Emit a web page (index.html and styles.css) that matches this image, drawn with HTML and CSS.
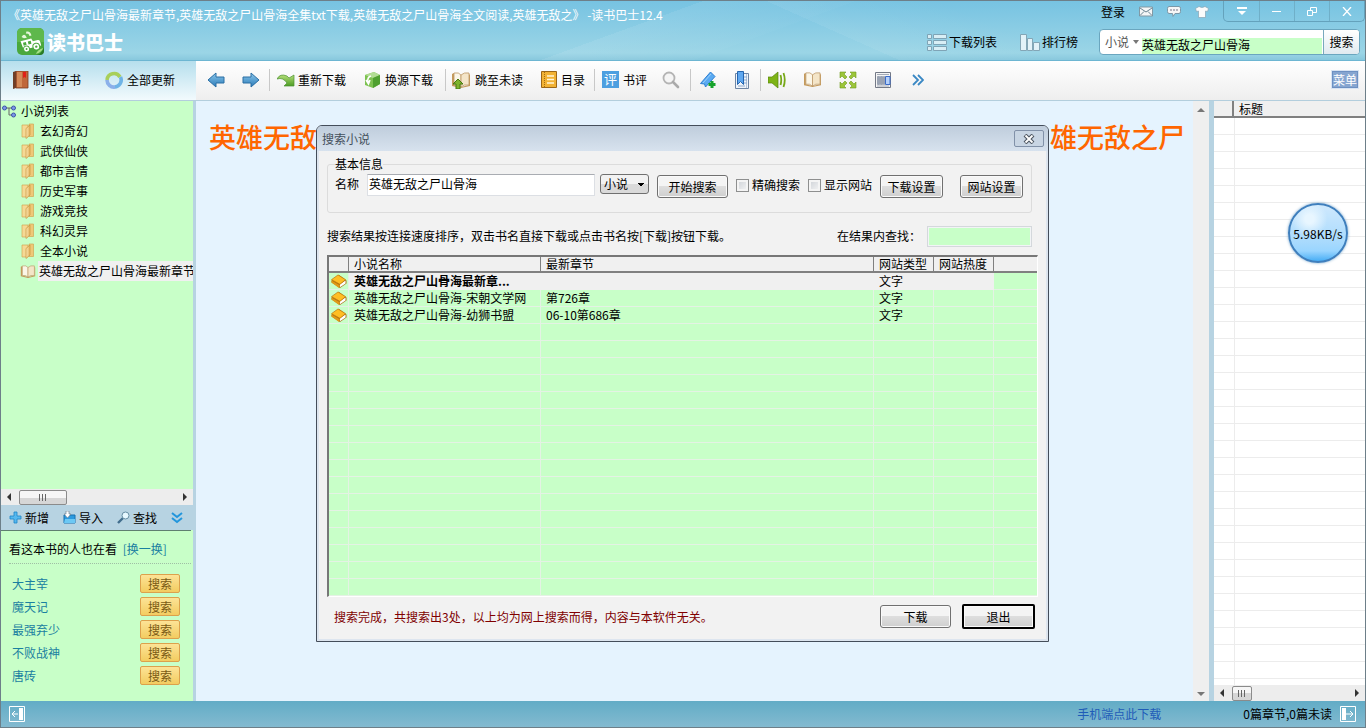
FILE: index.html
```html
<!DOCTYPE html>
<html lang="zh-CN">
<head>
<meta charset="utf-8">
<title>读书巴士12.4</title>
<link rel="stylesheet" href="styles.css">
</head>
<body>
<svg class="defs" aria-hidden="true">
  <defs>
    <linearGradient id="gFolder" x1="0" x2="1"><stop offset="0" stop-color="#fbe6b0"/><stop offset="1" stop-color="#e4b25e"/></linearGradient>
    <linearGradient id="gBlue" x1="0" y1="0" x2="0" y2="1"><stop offset="0" stop-color="#8cc8ec"/><stop offset="1" stop-color="#2a7ab8"/></linearGradient>
    <linearGradient id="gGreen" x1="0" y1="0" x2="0" y2="1"><stop offset="0" stop-color="#b4de78"/><stop offset="1" stop-color="#4c9c24"/></linearGradient>
    <symbol id="folder" viewBox="0 0 14 16"><path d="M1 2h6v12H1z" fill="#f5d995" stroke="#d3a654" stroke-width=".7"/><path d="M8 1h4.500v12.500H8z" fill="#efc878" stroke="#d3a654" stroke-width=".7"/><path d="M5 5.500L9 2v10l-4 3.500z" fill="url(#gFolder)" stroke="#c8963e" stroke-width=".7"/></symbol>
    <symbol id="book" viewBox="0 0 18 16"><path d="M1 7l8-6 8 6v3l-7 5-9-6z" fill="#a86a10"/><path d="M10 11l6-4v3l-6 4z" fill="#fff"/><path d="M1 6l7-5 8 5-6 5z" fill="#ffbe24" stroke="#c07c10" stroke-width=".8"/><path d="M1 7v2l8 6 1-3z" fill="#e09a18"/></symbol>
    <symbol id="openbook" viewBox="0 0 20 18"><path d="M1 3l2-1v12l7 2 8-2V3l1 1v11l-9 2-9-2z" fill="#c59a5b"/><path d="M3 2q5-1 7 2v12q-3-3-7-2z" fill="#fbf6e8" stroke="#bc9866" stroke-width=".8"/><path d="M10 4q3-3 8-2v12q-5-1-8 2z" fill="#f4e5c8" stroke="#bc9866" stroke-width=".8"/></symbol>
    <symbol id="arrow" viewBox="0 0 18 16"><path d="M1 8l8-7v4h8v6H9v4z" fill="url(#gBlue)" stroke="#2a6ea4"/></symbol>
  </defs>
</svg>

<header class="top">
  <div class="top-left">
    <h1 class="caption">《英雄无敌之尸山骨海最新章节,英雄无敌之尸山骨海全集txt下载,英雄无敌之尸山骨海全文阅读,英雄无敌之》 -读书巴士12.4</h1>
    <div class="brand">
      <svg width="27" height="27" viewBox="0 0 27 27"><rect width="27" height="27" rx="5" fill="#4aa83c"/><path d="M0 14h27V5a5 5 0 0 0-5-5H5a5 5 0 0 0-5 5z" fill="#5eb84c"/><g transform="rotate(-14 13 14)"><path d="M4 11h11l1 3h5q2 0 2 3v3H5z" fill="#fff"/><path d="M6 13h3v3H6zM11 13h3v3h-3z" fill="#4aa83c"/><path d="M12 3q4 0 4 5h-2q0-3-3-3zM6 7q4-4 5 2H8z" fill="#e6f7dc"/><circle cx="8" cy="20" r="3" fill="#fff" stroke="#4aa83c"/><circle cx="18" cy="20" r="3.4" fill="#fff" stroke="#4aa83c"/><circle cx="8" cy="20" r="1" fill="#4aa83c"/><circle cx="18" cy="20" r="1.2" fill="#4aa83c"/></g><path d="M19 27q6-1 8-8v4q0 4-4 4z" fill="#2a7a26"/><path d="M19 26q1-4 7-6-1 4-7 6z" fill="#a8e088"/></svg>
      <strong>读书巴士</strong>
    </div>
  </div>
  <div class="top-right">
    <div class="account">
      <a href="#">登录</a>
      <svg width="14" height="11" viewBox="0 0 14 11"><path d="M.5 1h13v9H.5z" fill="#f4f6f7" stroke="#8199a5"/><path d="M1 2l6 4 6-4M1 9.500l4-4M13 9.500l-4-4" fill="none" stroke="#6b8593"/></svg>
      <svg width="14" height="12" viewBox="0 0 14 12"><path d="M2 .5h10q1.500 0 1.500 2v3q0 2-1.500 2H8l-2 3-.5-3H2Q.5 7.500.5 5.500v-3Q.5.500 2 .5z" fill="#f6f6f6" stroke="#7b98a8"/><path d="M3 4h2M6 4h2M9 4h2" stroke="#778"/></svg>
      <svg width="14" height="12" viewBox="0 0 14 12"><path d="M4 .5q3 2 6 0l3.500 2-1 3-2-.5v6.500h-7V5l-2 .5-1-3z" fill="#fbfbfb" stroke="#88a5b4" stroke-width=".7"/></svg>
      <div class="wincontrols">
        <button aria-label="主菜单"><svg width="10" height="9" viewBox="0 0 10 9"><path d="M0 1h10" stroke="#fff" stroke-width="2"/><path d="M1 4h8L5 8z" fill="#fff"/></svg></button>
        <button aria-label="最小化"><svg width="10" height="9" viewBox="0 0 10 9"><path d="M0 4.500h9" stroke="#fff"/></svg></button>
        <button aria-label="还原"><svg width="10" height="9" viewBox="0 0 10 9"><path d="M3.500 3V.5h6v5H6M.5 3.500h5v5h-5z" fill="none" stroke="#fff"/></svg></button>
        <button aria-label="关闭"><svg width="10" height="9" viewBox="0 0 10 9"><path d="M1 0l8 9M9 0L1 9" stroke="#fff" stroke-width="1.300"/></svg></button>
      </div>
    </div>
    <div class="finder">
      <button class="plain"><svg width="20" height="17" viewBox="0 0 20 17"><g fill="#d8eef5" stroke="#7fa4b6"><path d="M.5.5h4v4h-4zM.5 6.500h4v4h-4zM.5 12.500h4v4h-4zM6.500.5h13v4h-13zM6.500 6.500h13v4h-13zM6.500 12.500h13v4h-13z"/></g></svg>下载列表</button>
      <button class="plain rank"><svg width="20" height="17" viewBox="0 0 20 17"><g fill="#e2f2f8" stroke="#83a6b6"><path d="M.5.5h6v16h-6zM7.500 4.500h5v12h-5zM13.500 8.500h6v8h-6z"/></g></svg>排行榜</button>
      <form class="search" onsubmit="return false">
        <button class="kind" type="button">小说<svg width="6" height="4" viewBox="0 0 6 4"><path d="M0 0h6L3 4z" fill="#777"/></svg></button>
        <input aria-label="搜索关键字" value="英雄无敌之尸山骨海">
        <button class="go">搜索</button>
      </form>
    </div>
  </div>
</header>

<div class="bars">
  <div class="bar-left">
    <button class="plain"><svg width="17" height="18" viewBox="0 0 17 18"><path d="M1 1l3-1v17l-3 1z" fill="#6f3f28"/><path d="M4 0h12v17H4z" fill="#c0673a" stroke="#7c3d22" stroke-width=".8"/><path d="M5 1h5v15H5z" fill="#d48a58"/><path d="M11 1h3v6l-1.500-1L11 7z" fill="#e02018"/></svg>制电子书</button>
    <button class="plain"><svg width="18" height="18" viewBox="0 0 18 18"><g fill="none" stroke-width="3.600"><path d="M2 9a7 7 0 0 1 13-3" stroke="#a8cf5a"/><path d="M15.500 6a7 7 0 0 1-6 10" stroke="#6fb4e6"/><path d="M10 16a7 7 0 0 1-8-7" stroke="#8bb0ea"/></g></svg>全部更新</button>
  </div>
  <nav class="bar-main">
    <button class="plain" aria-label="后退"><svg width="18" height="16"><use href="#arrow"/></svg></button>
    <button class="plain next" aria-label="前进"><svg width="18" height="16" class="flip"><use href="#arrow"/></svg></button>
    <i class="sep"></i>
    <button class="plain redo"><svg width="18" height="14" viewBox="0 0 18 14"><path d="M0 6q3-6 10-3l2 2 5-3v11H7l3-3q-4-6-10-4z" fill="url(#gGreen)" stroke="#4c9130" stroke-width=".7"/></svg>重新下载</button>
    <button class="plain swap"><svg width="17" height="18" viewBox="0 0 17 18"><path d="M1 4l9-3 6 3v9l-7 4-8-3z" fill="#7cc250"/><path d="M1 4l9-3 6 3-7 3z" fill="#b2dd94"/><path d="M9 7l7-3v9l-7 4z" fill="#4fa030"/><path d="M7 5q-4 1-3 6M2 9l2.500 4L6 9" fill="none" stroke="#fff" stroke-width="1.500"/></svg>换源下载</button>
    <i class="sep"></i>
    <button class="plain jump"><svg width="20" height="18" viewBox="0 0 20 18"><use href="#openbook"/><path d="M7 8l5 5H9v5H5v-5H2z" fill="#7db32c" stroke="#46780e"/></svg>跳至未读</button>
    <button class="plain toc"><svg width="16" height="17" viewBox="0 0 16 17"><path d="M.5.5h15v16H.5z" fill="#f2b234" stroke="#9c6718"/><path d="M3.500 1v15" stroke="#a16d14" stroke-dasharray="1 1"/><path d="M6 5h7M6 8.500h7M6 12h7" stroke="#fff5d8" stroke-width="1.500"/></svg>目录</button>
    <i class="sep"></i>
    <button class="plain review"><span class="badge">评</span>书评</button>
    <button class="plain lens" aria-label="查找"><svg width="18" height="18" viewBox="0 0 18 18"><circle cx="7" cy="7" r="5.500" fill="#f5f5f5" stroke="#b4b4b4" stroke-width="1.800"/><path d="M11 11l5 5" stroke="#aaa" stroke-width="2.600" stroke-linecap="round"/></svg></button>
    <i class="sep"></i>
    <button class="plain tagger" aria-label="添加书签"><svg width="18" height="18" viewBox="0 0 18 18"><path d="M1.500 12.500L11.500 1l4.500 4.500L6.500 16l-1-3z" fill="#5aaaf2" stroke="#2d7fd2"/><path d="M4 12L12 3" stroke="#9bd0fc"/><path d="M13 10v7M9.500 13.500h7" stroke="#17a32c" stroke-width="3"/></svg></button>
    <button class="plain mark" aria-label="书签"><svg width="14" height="18" viewBox="0 0 14 18"><path d="M.5 2.500h13v15H.5z" fill="#f0f4fa" stroke="#6d85a4"/><path d="M11.500 3v14" stroke="#b3c4da"/><path d="M9 6h3M9 9h3M9 12h3M3 15h7" stroke="#8eaacc"/><path d="M2.500.5h6v13l-3-3-3 3z" fill="#60a8f0" stroke="#2566b0"/></svg></button>
    <i class="sep"></i>
    <button class="plain sound" aria-label="朗读"><svg width="18" height="18" viewBox="0 0 18 18"><path d="M0 6h4l6-5v16l-6-5H0z" fill="#7eb416" stroke="#57840b" stroke-width=".7"/><path d="M12.500 4q1.500 5 0 10M15.500 2q2.500 7 0 14" fill="none" stroke="#77a818" stroke-width="1.800"/></svg></button>
    <button class="plain read" aria-label="阅读"><svg width="19" height="17" viewBox="0 0 20 18"><use href="#openbook"/></svg></button>
    <button class="plain full" aria-label="全屏"><svg width="18" height="18" viewBox="0 0 18 18"><path d="M1 1h6L5 3l3 3-2 2-3-3-2 2zM17 1v6l-2-2-3 3-2-2 3-3-2-2zM1 17v-6l2 2 3-3 2 2-3 3 2 2zM17 17h-6l2-2-3-3 2-2 3 3 2-2z" fill="#9cc53a" stroke="#6f9a1c" stroke-width=".6"/></svg></button>
    <button class="plain cols" aria-label="分栏"><svg width="16" height="16" viewBox="0 0 16 16"><path d="M.5.5h15v15H.5z" fill="#f5f5f5" stroke="#737986"/><path d="M2 2.500h12M2 14h12" stroke="#a4abb8"/><path d="M2.500 4.500h2v8h-2zM5.500 4.500h2v8h-2zM8.500 4.500h1v8h-1z" fill="#9aa3b3" stroke="#9aa3b3"/><path d="M10.500 4.500h4.500v8h-4.500z" fill="#b4d0fa" stroke="#3a6bc8"/></svg></button>
    <button class="plain more" aria-label="更多"><svg width="12" height="12" viewBox="0 0 12 12"><path d="M1 1l5 5-5 5M6 1l5 5-5 5" fill="none" stroke="#3a88c4" stroke-width="1.800"/></svg></button>
    <button class="plain menu">菜单</button>
  </nav>
</div>

<main class="work">
  <aside class="side">
    <ul class="tree">
      <li class="root"><svg width="14" height="13" viewBox="0 0 14 13"><path d="M3 3h4v7h4M7 3h4" fill="none" stroke="#666"/><g fill="#7c98e8" stroke="#3c54a8"><circle cx="2.500" cy="3" r="2"/><circle cx="11.500" cy="3" r="2"/><circle cx="11.500" cy="10" r="2"/></g></svg><span>小说列表</span></li>
      <li><svg width="14" height="16"><use href="#folder"/></svg><span>玄幻奇幻</span></li>
      <li><svg width="14" height="16"><use href="#folder"/></svg><span>武侠仙侠</span></li>
      <li><svg width="14" height="16"><use href="#folder"/></svg><span>都市言情</span></li>
      <li><svg width="14" height="16"><use href="#folder"/></svg><span>历史军事</span></li>
      <li><svg width="14" height="16"><use href="#folder"/></svg><span>游戏竞技</span></li>
      <li><svg width="14" height="16"><use href="#folder"/></svg><span>科幻灵异</span></li>
      <li><svg width="14" height="16"><use href="#folder"/></svg><span>全本小说</span></li>
      <li class="chosen"><svg width="16" height="15"><use href="#openbook"/></svg><span>英雄无敌之尸山骨海最新章节</span></li>
    </ul>
    <div class="hscroll"><i class="tri left"></i><b class="thumb wide"></b><i class="tri right"></i></div>
    <div class="side-tools">
      <button class="plain"><svg width="13" height="13" viewBox="0 0 13 13"><path d="M5 1h3v4h4v3H8v4H5V8H1V5h4z" fill="#56b8ee" stroke="#1c86c8" stroke-width=".8"/></svg>新增</button>
      <button class="plain"><svg width="13" height="13" viewBox="0 0 13 13"><path d="M1 4h11v8H1z" fill="#2c9ade" stroke="#1670b0"/><path d="M2 8h10v4H1z" fill="#6cc8f4"/><path d="M3 0h3v3h2L4.500 7 1 3h2z" fill="#fff" stroke="#678" stroke-width=".6"/></svg>导入</button>
      <button class="plain"><svg width="13" height="13" viewBox="0 0 13 13"><path d="M1 12l5-5" stroke="#426e8e" stroke-width="2.400"/><circle cx="8.500" cy="4.500" r="3.500" fill="#e6f8ff" stroke="#668ea4"/></svg>查找</button>
      <button class="plain" aria-label="展开"><svg width="12" height="12" viewBox="0 0 12 12"><path d="M1 1l5 4 5-4M1 6l5 4 5-4" fill="none" stroke="#2396dc" stroke-width="2"/></svg></button>
    </div>
    <section class="also">
      <h2>看这本书的人也在看 <a href="#">[换一换]</a></h2>
      <ul>
        <li><a href="#">大主宰</a><button>搜索</button></li>
        <li><a href="#">魔天记</a><button>搜索</button></li>
        <li><a href="#">最强弃少</a><button>搜索</button></li>
        <li><a href="#">不败战神</a><button>搜索</button></li>
        <li><a href="#">唐砖</a><button>搜索</button></li>
      </ul>
    </section>
  </aside>

  <article class="reader">
    <h2><span>英雄无敌</span><span>雄无敌之尸</span></h2>
  </article>
  <div class="vscroll"><i class="tri up"></i><i class="tri down"></i></div>

  <aside class="chapters">
    <div class="lines">
      <table><thead><tr><th class="c0"></th><th>标题</th></tr></thead></table>
    </div>
    <div class="hscroll"><i class="tri left"></i><b class="thumb"></b><i class="tri right"></i></div>
  </aside>

  <div class="speed">5.98KB/s</div>

  <section class="dialog" role="dialog" aria-labelledby="dlg">
    <div class="dlg-title"><span id="dlg">搜索小说</span><button aria-label="关闭"><svg width="12" height="10" viewBox="0 0 12 10"><path d="M2 1l8 8M10 1L2 9" stroke="#4c5560" stroke-width="4"/><path d="M2.500 1.500l7 7M9.500 1.500l-7 7" stroke="#fff" stroke-width="1.800"/></svg></button></div>
    <div class="dlg-body">
      <fieldset>
        <legend>基本信息</legend>
        <div class="fields">
          <label for="name">名称</label>
          <input id="name" class="box" value="英雄无敌之尸山骨海">
          <select aria-label="类型"><option>小说</option></select>
          <button class="btn start">开始搜索</button>
          <label class="tick"><input type="checkbox">精确搜索</label>
          <label class="tick second"><input type="checkbox">显示网站</label>
          <button class="btn">下载设置</button>
          <button class="btn">网站设置</button>
        </div>
      </fieldset>
      <div class="hint">
        <span>搜索结果按连接速度排序，双击书名直接下载或点击书名按[下载]按钮下载。</span>
        <label for="within">在结果内查找：</label>
        <input id="within" class="box">
      </div>
      <table class="results">
        <colgroup><col class="w-icon"><col class="w-name"><col class="w-last"><col class="w-kind"><col class="w-kind"><col></colgroup>
        <thead><tr><th></th><th>小说名称</th><th>最新章节</th><th>网站类型</th><th>网站热度</th><th></th></tr></thead>
        <tbody>
          <tr class="hot"><td><svg width="18" height="16"><use href="#book"/></svg></td><td>英雄无敌之尸山骨海最新章...</td><td></td><td>文字</td><td></td><td></td></tr>
          <tr><td><svg width="18" height="16"><use href="#book"/></svg></td><td>英雄无敌之尸山骨海-宋朝文学网</td><td>第726章</td><td>文字</td><td></td><td></td></tr>
          <tr><td><svg width="18" height="16"><use href="#book"/></svg></td><td>英雄无敌之尸山骨海-幼狮书盟</td><td>06-10第686章</td><td>文字</td><td></td><td></td></tr>
          <tr><td></td><td></td><td></td><td></td><td></td><td></td></tr>
          <tr><td></td><td></td><td></td><td></td><td></td><td></td></tr>
          <tr><td></td><td></td><td></td><td></td><td></td><td></td></tr>
          <tr><td></td><td></td><td></td><td></td><td></td><td></td></tr>
          <tr><td></td><td></td><td></td><td></td><td></td><td></td></tr>
          <tr><td></td><td></td><td></td><td></td><td></td><td></td></tr>
          <tr><td></td><td></td><td></td><td></td><td></td><td></td></tr>
          <tr><td></td><td></td><td></td><td></td><td></td><td></td></tr>
          <tr><td></td><td></td><td></td><td></td><td></td><td></td></tr>
          <tr><td></td><td></td><td></td><td></td><td></td><td></td></tr>
          <tr><td></td><td></td><td></td><td></td><td></td><td></td></tr>
          <tr><td></td><td></td><td></td><td></td><td></td><td></td></tr>
          <tr><td></td><td></td><td></td><td></td><td></td><td></td></tr>
          <tr><td></td><td></td><td></td><td></td><td></td><td></td></tr>
          <tr><td></td><td></td><td></td><td></td><td></td><td></td></tr>
          <tr><td></td><td></td><td></td><td></td><td></td><td></td></tr>
        </tbody>
      </table>
      <div class="dlg-foot">
        <p>搜索完成，共搜索出3处，以上均为网上搜索而得，内容与本软件无关。</p>
        <button class="btn">下载</button>
        <button class="btn default">退出</button>
      </div>
    </div>
  </section>
</main>

<footer class="status">
  <button class="plain" aria-label="收起左栏"><svg width="16" height="16" viewBox="0 0 16 16"><path d="M.5.5h15v15H.5z" fill="none" stroke="#fff"/><path d="M10 2h4v12h-4z" fill="#fff"/><path d="M9 8H3M6 5L3 8l3 3" fill="none" stroke="#fff"/></svg></button>
  <a href="#">手机端点此下载</a>
  <span>0篇章节,0篇未读</span>
  <button class="plain" aria-label="收起右栏"><svg width="16" height="16" viewBox="0 0 16 16"><path d="M.5.5h15v15H.5z" fill="none" stroke="#fff"/><path d="M2 2h4v12H2z" fill="#fff"/><path d="M6 8h7M10 5l3 3-3 3" fill="none" stroke="#fff"/></svg></button>
</footer>
</body>
</html>
```

FILE: styles.css
```css
* { box-sizing: border-box; }
body {
  margin: 0;
  min-height: 100vh;
  display: flex;
  flex-direction: column;
  border: 1px solid #6d7f89;
  background: #e5f3fe;
  color: #000;
  overflow: hidden;
  font: 12px/16px "Noto Sans CJK SC", "Liberation Sans", sans-serif;
}
button, input, select { font: inherit; color: inherit; margin: 0; padding: 0; }
button { border: 0; background: none; white-space: nowrap; }
a { color: #1a80a0; text-decoration: none; }
ul { list-style: none; margin: 0; padding: 0; }
h1, h2, p { margin: 0; font-size: 12px; font-weight: 400; }
svg { flex: none; display: block; }
.defs { position: absolute; width: 0; height: 0; }
.plain { display: flex; align-items: center; gap: 4px; flex: none; }

/* title area */
.top {
  display: flex;
  justify-content: space-between;
  height: 60px;
  border-bottom: 1px solid #6db6d2;
  background:
    linear-gradient(160deg, transparent 46%, rgba(255,255,255,.08) 46%, rgba(255,255,255,.02) 56%, transparent 56%),
    linear-gradient(24deg, transparent 60%, rgba(255,255,255,.06) 60%, transparent 72%),
    linear-gradient(#77c3e2, #9bd5e6 88%, #88c8dd);
}
.caption { padding: 6px 0 0 7px; color: #fff; white-space: nowrap; }
.brand { display: flex; align-items: center; gap: 3px; padding: 5px 0 0 16px; color: #fff; }
.brand strong { font-size: 19px; line-height: 27px; font-weight: 900; }
.top-right { display: flex; flex-direction: column; align-items: flex-end; gap: 7px; }
.account { display: flex; align-items: center; gap: 14px; height: 21px; }
.account a { color: #000; }
.wincontrols {
  display: grid;
  grid-template-columns: repeat(4, 35px);
  height: 21px;
  border: 1px solid #64a2bc;
  border-top: 0;
  border-radius: 0 0 5px 5px;
}
.wincontrols button { display: grid; place-items: center; }
.wincontrols button + button { border-left: 1px solid #6fafc8; }
.finder { display: flex; align-items: center; padding-right: 5px; }
.finder .plain { gap: 2px; }
.finder .rank { margin: 0 21px 0 23px; }
.search {
  display: flex;
  width: 261px;
  height: 26px;
  border: 1px solid #6aa6bf;
  border-radius: 4px;
  background: #fff;
  overflow: hidden;
}
.kind { display: flex; align-items: center; gap: 4px; width: 42px; padding-left: 5px; color: #555; }
.search input { flex: 1; min-width: 0; height: 17px; margin: 8px 1px 0 0; padding-bottom: 4px; border: 0; background: #c8ffc8; }
.go { width: 36px; border-left: 1px solid #79a9bd; background: linear-gradient(#fff, #e0eaf0); }

/* toolbars */
.bars { display: flex; height: 40px; border-bottom: 1px solid #b3cedd; }
.bar-left {
  display: flex;
  align-items: center;
  gap: 24px;
  width: 195px;
  padding: 0 0 2px 11px;
  background: linear-gradient(#b6dfed, #f2fafd);
}
.bar-main {
  flex: 1;
  display: flex;
  align-items: center;
  padding: 0 7px 2px 11px;
  background: linear-gradient(#fff, #eee);
}
.flip { transform: scaleX(-1); }
.sep { width: 1px; height: 22px; background: #c8c8c8; flex: none; }
.next { margin: 0 9px 0 17px; }
.redo { margin-left: 7px; gap: 3px; }
.swap { margin: 0 12px 0 18px; }
.jump { margin-left: 5px; }
.toc { margin: 0 9px 0 18px; }
.review { margin-left: 7px; }
.badge { width: 17px; height: 17px; background: #4d9fe0; color: #fff; font-size: 13px; line-height: 16px; text-align: center; }
.lens { margin: 0 10px 0 15px; }
.tagger { margin-left: 8px; }
.mark { margin: 0 11px 0 18px; }
.sound { margin-left: 7px; }
.read { margin-left: 17px; }
.full { margin-left: 17px; }
.cols { margin-left: 18px; }
.more { margin-left: 21px; }
.menu { margin-left: auto; height: 17px; background: #86a5d0; color: #fff; border: 1px solid #6d90c2; outline: 1px solid #d7e3f3; }

/* work area */
.work { flex: 1; display: flex; position: relative; }
.side { width: 195px; display: flex; flex-direction: column; border-right: 3px solid #b7d3e2; background: #c8ffc8; }
.tree { flex: 1; overflow: hidden; }
.tree li { display: flex; align-items: center; gap: 4px; height: 20px; padding-left: 20px; white-space: nowrap; }
.tree .root { padding-left: 1px; }
.tree li span { padding: 2px 1px; }
.tree .chosen span { background: #f0f0f0; flex: 1; }
.tree .chosen { padding-left: 19px; gap: 2px; overflow: hidden; }

.hscroll { display: flex; align-items: center; height: 16px; padding: 0 6px; background: #ededed; }
.tri { width: 0; height: 0; border: 4px solid transparent; flex: none; }
.tri.left { border-right-color: #333; border-left: 0; }
.tri.right { border-left-color: #333; border-right: 0; margin-left: auto; }
.tri.up { border-bottom-color: #777; border-top: 0; }
.tri.down { border-top-color: #777; border-bottom: 0; }
.thumb {
  width: 20px;
  height: 15px;
  margin-left: 8px;
  border: 1px solid #8b8b8b;
  border-radius: 2px;
  background:
    repeating-linear-gradient(90deg, #666 0 1px, transparent 1px 3px) center / 8px 7px no-repeat,
    linear-gradient(#f6f6f6 50%, #d6d6d6 50%);
}
.thumb.wide { width: 48px; }

.side-tools { display: flex; align-items: center; justify-content: space-between; height: 25px; padding: 0 10px 0 8px; background: #b7d3e2; }
.side-tools .plain { gap: 3px; }
.also { height: 171px; margin-right: 2px; border-top: 1px solid #5f7f70; padding: 10px 0 0 8px; }
.also h2 { padding-bottom: 6px; border-bottom: 1px dotted #9fbfa5; margin-bottom: 8px; }
.also h2 a { margin-left: 3px; }
.also li { display: flex; align-items: center; justify-content: space-between; height: 23px; padding: 0 11px 0 3px; }
.also li button { width: 40px; height: 19px; border: 1px solid #dca14c; border-radius: 2px; background: linear-gradient(#fce396, #f3cc60); color: #7a5a14; line-height: 17px; }

.reader { flex: 1; overflow: hidden; background: #e5f3fe; }
.reader h2 {
  display: flex;
  justify-content: space-between;
  padding: 17px 8px 0 13px;
  color: #f60;
  font-size: 27px;
  line-height: 38px;
  font-weight: 500;
  white-space: nowrap;
}
.vscroll { width: 16px; padding: 7px 0 5px; display: flex; flex-direction: column; justify-content: space-between; align-items: center; background: #efefef; }
.chapters { width: 156px; display: flex; flex-direction: column; border-left: 5px solid #b7d3e2; background: #fff; }
.lines {
  flex: 1;
  background:
    linear-gradient(#ececec, #ececec) 20px 0 / 1px 100% no-repeat,
    repeating-linear-gradient(transparent 0 16px, #ececec 16px 17px);
}
table { width: 100%; border-spacing: 0; table-layout: fixed; }
th { height: 17px; padding: 0 0 0 5px; text-align: left; font-weight: 400; line-height: 15px; white-space: nowrap; background: #f0f0f0; border-bottom: 2px solid #808080; }
.chapters .c0 { width: 20px; border-right: 2px solid #808080; }

.speed {
  position: absolute;
  right: 17px;
  top: 102px;
  width: 60px;
  height: 60px;
  border: 2px solid #3f7fbd;
  border-radius: 50%;
  background: radial-gradient(circle at 35% 25%, #e8f6ff 0 8%, transparent 32%), linear-gradient(#cfe9fd, #a9dafd 65%, #9ad5ff 82%, #48aef5);
  box-shadow: 0 0 3px #7aa8cc;
  line-height: 58px;
  text-align: center;
}

/* search window */
.dialog {
  position: absolute;
  left: 315px;
  top: 24px;
  width: 733px;
  border: 1px solid #444d5a;
  border-radius: 6px 6px 0 0;
  background: #f2f2f2;
  box-shadow: inset 0 0 0 2px #dde5ef;
}
.dlg-title { display: flex; justify-content: space-between; align-items: center; height: 25px; padding: 0 4px 0 5px; border-radius: 5px 5px 0 0; background: linear-gradient(#bfcddc, #d7e2ee); color: #44505c; }
.dlg-title button { display: grid; place-items: center; width: 30px; height: 17px; border: 1px solid #8191a8; border-radius: 2px; background: #c8d5e3; }
.dlg-body { padding: 5px 10px 12px; }
fieldset { margin: 0 6px 0 0; padding: 0 7px; height: 57px; min-width: 0; border: 1px solid #dcdcdc; border-radius: 3px; }
legend { padding: 0; line-height: 16px; }
.fields { display: flex; align-items: flex-start; margin-top: 1px; }
.fields > label { padding-top: 3px; white-space: nowrap; flex: none; }
.box { border: 1px solid #dcdfe4; border-top-color: #a9acb2; background: #fff; }
#name { width: 228px; height: 22px; margin: 1px 5px 0 8px; padding: 0 1px 4px; flex: none; }
select {
  flex: none;
  width: 49px;
  height: 20px;
  margin: 1px 8px 0 0;
  padding-left: 3px;
  border: 1px solid #707070;
  border-radius: 3px;
  appearance: none;
  background:
    linear-gradient(to bottom left, #000 50%, transparent 50%) 36px 8px / 4px 4px no-repeat,
    linear-gradient(to bottom right, #000 50%, transparent 50%) 40px 8px / 4px 4px no-repeat,
    linear-gradient(#f2f2f2 50%, #dadada 50%);
}
.btn { width: 63px; height: 23px; border: 1px solid #707070; border-radius: 3px; background: linear-gradient(#f4f4f4 48%, #dedede 50%, #cfcfcf); box-shadow: inset 0 0 0 1px #fafafa; line-height: 21px; flex: none; }
.fields .btn { margin-top: 2px; }
.fields .btn:last-child { margin-left: 17px; }
.fields .start { width: 71px; margin-right: 8px; }
.fields .tick { display: flex; align-items: center; gap: 3px; padding-top: 4px; }
.fields .second { margin: 0 8px; }
.tick input { appearance: none; width: 13px; height: 13px; border: 1px solid #8e8f8f; background: linear-gradient(135deg, #ccd0d5, #f6f6f6); box-shadow: inset 0 0 0 2px #f4f4f4; }
.hint { display: flex; align-items: center; margin: 12px 6px 8px 0; height: 22px; white-space: nowrap; }
.hint label { margin-left: auto; margin-right: 6px; }
#within { width: 105px; height: 21px; background: #c8ffc8; border: 2px solid #f2f4f6; outline: 1px solid #d4d8dc; outline-offset: -1px; }

.results { width: 711px; border: 2px solid #777; border-right: 1px solid #fff; border-bottom: 1px solid #fff; background: #c8ffc8; }
.w-icon { width: 20px; }
.w-name { width: 192px; }
.w-last { width: 333px; }
.w-kind { width: 60px; }
.results th { height: 16px; line-height: 14px; border-right: 1px solid #808080; }
.results th:last-child { border-right: 0; }
.results td { height: 17px; padding: 0 0 0 5px; line-height: 16px; border-bottom: 1px solid #e4f2e4; border-right: 1px solid #e4f2e4; white-space: nowrap; overflow: hidden; }
.results td:last-child { border-right: 0; }
.results td:first-child { padding: 0 0 0 1px; }
.results td svg { height: 15px; }
.hot td:not(:first-child):not(:last-child) { background: #f0f0f0; border-color: #f0f0f0; }
.hot td:nth-child(2) { font-weight: 700; }
.dlg-foot { display: flex; align-items: center; gap: 11px; padding: 7px 3px 0 7px; }
.dlg-foot p { flex: 1; color: #800000; }
.dlg-foot .btn { width: 71px; }
.dlg-foot .default { width: 73px; height: 25px; border: 2px solid #000; border-radius: 2px; }

.status { display: flex; align-items: center; height: 26px; padding: 0 9px 0 8px; background: linear-gradient(#62acc6, #83bad0); }
.status a { margin-left: auto; margin-right: 82px; color: #1f5cb8; }
.status span { margin-right: 8px; }
```
